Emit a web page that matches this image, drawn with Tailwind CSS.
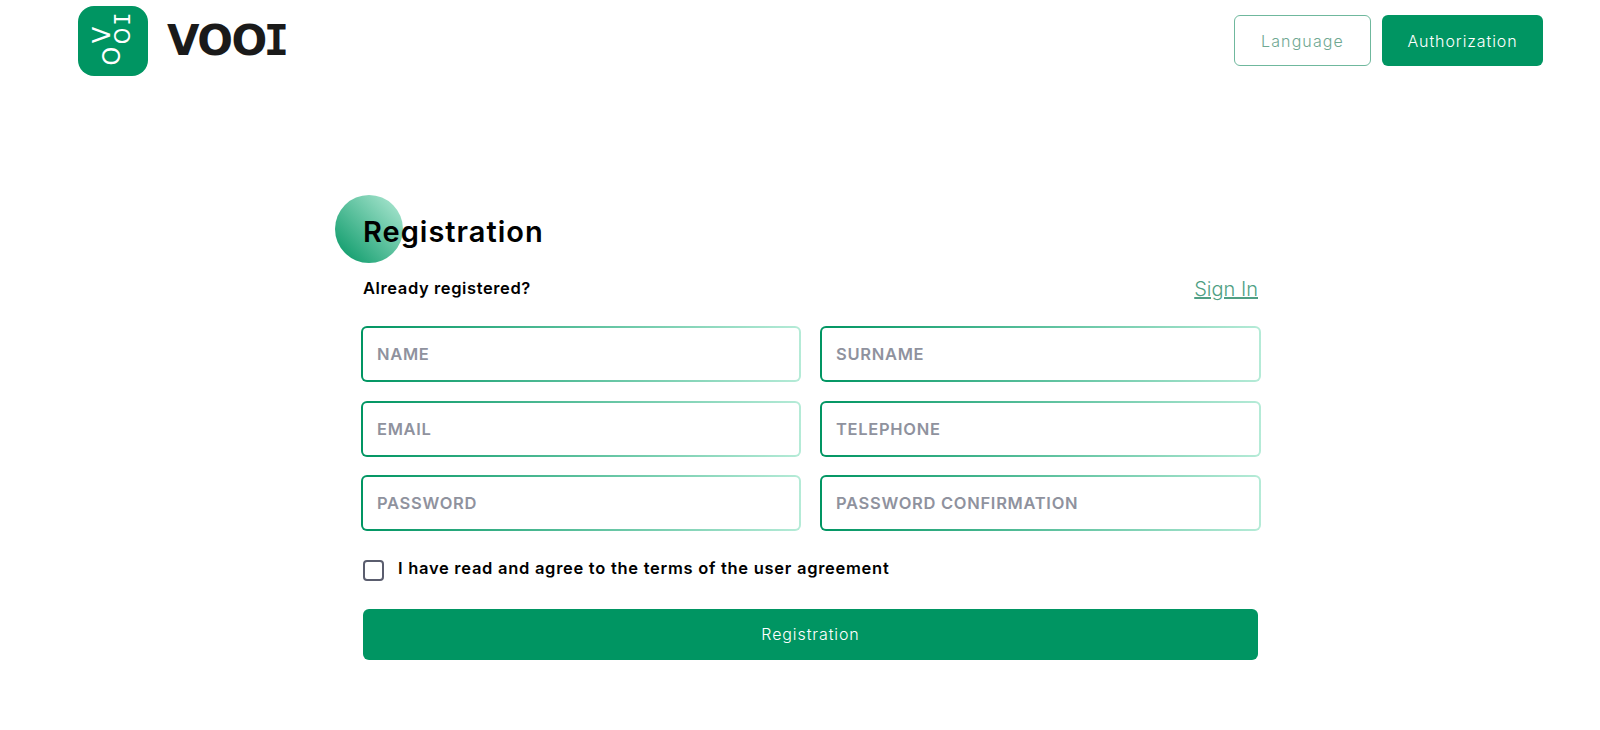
<!DOCTYPE html>
<html lang="en">
<head>
    <meta charset="UTF-8">
    <meta name="viewport" content="width=device-width, initial-scale=1.0">
    <title>VOOI</title>
    <script src="https://cdn.jsdelivr.net/npm/@tailwindcss/browser@4"></script>
</head>
<body class="bg-white font-['Inter','Liberation_Sans',sans-serif] text-black overflow-hidden h-[730px]">

    <!-- Header -->
    <header class="flex justify-between items-start pl-[78px] pr-[57px] pt-[6px] h-[80px]">
        <a href="#" class="flex items-center gap-[19px]">
            <div class="relative w-[70px] h-[70px] rounded-[16px] bg-[#009562] text-white font-['DejaVu_Sans',sans-serif]">
                <span class="absolute left-[24px] top-[40px] w-[20px] text-center text-[24px] leading-[20px] -rotate-90">O</span>
                <span class="absolute left-[14px] top-[19px] w-[20px] text-center text-[24px] leading-[20px] -rotate-90">V</span>
                <span class="absolute left-[35px] top-[20px] w-[20px] text-center text-[21px] leading-[20px] -rotate-90">O</span>
                <span class="absolute left-[35px] top-[3px] w-[20px] text-center text-[22px] leading-[20px] -rotate-90 font-['DejaVu_Sans_Mono',monospace]">I</span>
            </div>
            <span class="font-['DejaVu_Sans',sans-serif] font-bold text-[42px] leading-none tracking-[-1.5px] text-[#1a1a1a]">VOO<span class="font-['DejaVu_Sans_Mono',monospace] -ml-[2px]">I</span></span>
        </a>
        <div class="flex gap-[11px] mt-[9px]">
            <button class="w-[137px] h-[51px] pt-[1px] rounded-[6px] border border-[#6fb89d] text-[16px] tracking-[1.1px] font-light text-[#6fa892]">Language</button>
            <button class="w-[161px] h-[51px] pt-[1px] rounded-[6px] bg-[#009562] text-[16px] tracking-[0.9px] font-light text-white">Authorization</button>
        </div>
    </header>

    <!-- Registration form -->
    <main class="w-[895px] ml-[363px] mt-[115px]">
        <div class="relative h-[67px] flex items-center">
            <div class="absolute left-[-28px] top-0 w-[68px] h-[68px] rounded-full bg-linear-to-tr/srgb from-[#009562] to-[#b5ebd7]"></div>
            <h1 class="relative mt-[6px] text-[29px] tracking-[1px] font-semibold leading-none">Registration</h1>
        </div>
        <div class="flex justify-between items-center mt-[13px] h-[26px]">
            <p class="text-[16.5px] tracking-[0.6px] font-semibold">Already registered?</p>
            <a href="#" class="mt-[2px] text-[20px] font-light underline text-[#4f9f84]">Sign In</a>
        </div>

        <div class="grid grid-cols-[440px_441px] gap-x-[19px] gap-y-[18.5px] -ml-[2px] mt-[25px]">
            <div class="h-[56px] rounded-[6px] p-[2px] bg-linear-to-r/srgb from-[#009562] to-[#b5ebd7]">
                <input type="text" placeholder="NAME" class="w-full h-full rounded-[4px] bg-white px-[14px] text-[16.5px] tracking-[0.7px] font-semibold outline-none placeholder:text-[#8f929e]">
            </div>
            <div class="h-[56px] rounded-[6px] p-[2px] bg-linear-to-r/srgb from-[#009562] to-[#b5ebd7]">
                <input type="text" placeholder="SURNAME" class="w-full h-full rounded-[4px] bg-white px-[14px] text-[16.5px] tracking-[0.7px] font-semibold outline-none placeholder:text-[#8f929e]">
            </div>
            <div class="h-[56px] rounded-[6px] p-[2px] bg-linear-to-r/srgb from-[#009562] to-[#b5ebd7]">
                <input type="text" placeholder="EMAIL" class="w-full h-full rounded-[4px] bg-white px-[14px] text-[16.5px] tracking-[0.7px] font-semibold outline-none placeholder:text-[#8f929e]">
            </div>
            <div class="h-[56px] rounded-[6px] p-[2px] bg-linear-to-r/srgb from-[#009562] to-[#b5ebd7]">
                <input type="text" placeholder="TELEPHONE" class="w-full h-full rounded-[4px] bg-white px-[14px] text-[16.5px] tracking-[0.7px] font-semibold outline-none placeholder:text-[#8f929e]">
            </div>
            <div class="h-[56px] rounded-[6px] p-[2px] bg-linear-to-r/srgb from-[#009562] to-[#b5ebd7]">
                <input type="password" placeholder="PASSWORD" class="w-full h-full rounded-[4px] bg-white px-[14px] text-[16.5px] tracking-[0.7px] font-semibold outline-none placeholder:text-[#8f929e]">
            </div>
            <div class="h-[56px] rounded-[6px] p-[2px] bg-linear-to-r/srgb from-[#009562] to-[#b5ebd7]">
                <input type="password" placeholder="PASSWORD CONFIRMATION" class="w-full h-full rounded-[4px] bg-white px-[14px] text-[16.5px] tracking-[0.7px] font-semibold outline-none placeholder:text-[#8f929e]">
            </div>
        </div>

        <label class="flex items-start gap-[14px] mt-[28px]">
            <span class="w-[21px] h-[21px] mt-[1px] rounded-[4px] border-2 border-[#5a5d6e] bg-white"></span>
            <span class="text-[16.5px] tracking-[0.72px] font-semibold leading-[18px]">I have read and agree to the terms of the user agreement</span>
        </label>

        <button class="w-full h-[51px] pb-[1px] mt-[28px] rounded-[6px] bg-[#009562] text-[16px] tracking-[0.9px] font-light text-white">Registration</button>
    </main>

</body>
</html>
